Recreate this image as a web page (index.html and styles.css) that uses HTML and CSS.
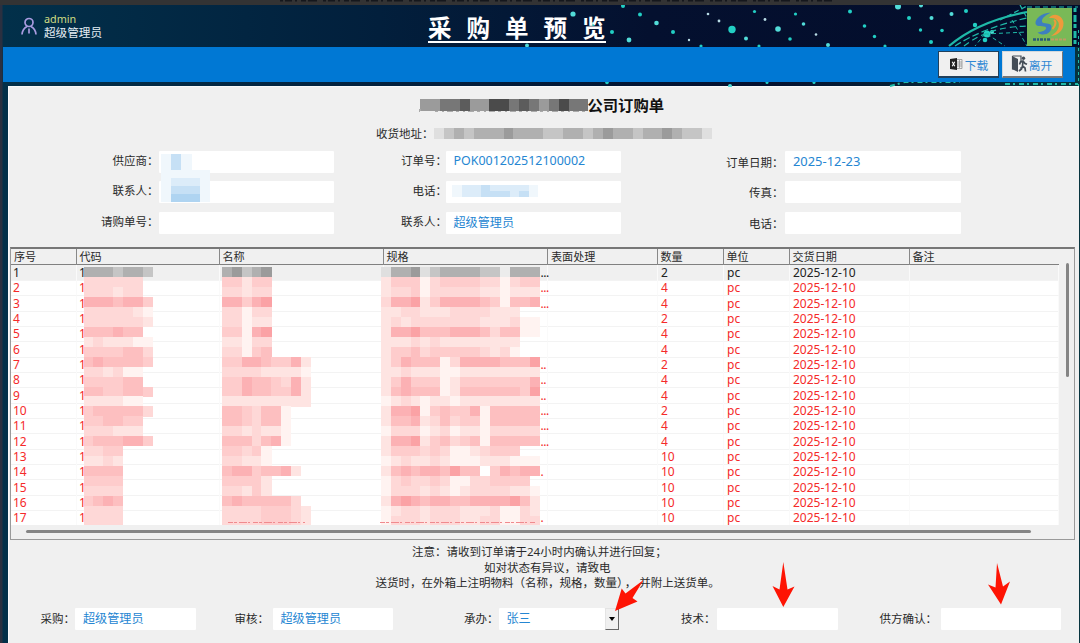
FILE: index.html
```html
<!DOCTYPE html>
<html lang="zh-CN">
<head>
    <meta charset="UTF-8">
    <meta name="viewport" content="width=device-width, initial-scale=1.0">
    <title>采购单预览</title>
    <link rel="stylesheet" href="styles.css">
</head>
<body>

    <div class="window">
        <div class="titlebar">
            <svg width="560" height="5"><path d="M4 0.5H556" stroke="#15171c" stroke-width="2" stroke-dasharray="3 2 7 3 2 4 5 2 9 6"/></svg>
        </div>

        <div class="header">
            <svg class="stars" id="stars" width="1080" height="82" viewBox="0 5 1080 82"></svg>
            <div class="user">
                <svg width="18" height="20" viewBox="0 0 18 20" fill="none" stroke="#a99be0" stroke-width="1.7">
                    <circle cx="9" cy="6.500" r="4"/>
                    <path d="M2 18.500c.3-4 2.300-6.500 5-8M16 18.500c-.3-4-2.300-6.500-5-8M9 12.500v5"/>
                </svg>
                <div class="user-text">
                    <div class="login">admin</div>
                    <div class="role">超级管理员</div>
                </div>
            </div>
            <h1>采 购 单 预 览</h1>
            <svg class="logo" width="45" height="38" viewBox="0 0 45 38">
                <rect width="45" height="38" fill="#79b957"/>
                <path d="M24 4.500C14 5 8 11 8.500 15.500C9 20 18 17 19 19.500C20 22 15 24 10.500 24.500C17 29.500 25 24.500 24.500 18.500C24 14 15.500 16.500 15 13.500C14.500 10 19 7 24 4.500Z" fill="#3d7fc0"/>
                <path d="M22 10C27 3.500 36.500 8 36.500 15.500C36.500 22 31 27.500 24 28C30 24.500 33 19.500 31.500 14.500C30 10.500 26 9.500 22 10Z" fill="#ee9a3c"/>
                <path d="M27 12C30 14 28 18.500 25.500 21" fill="none" stroke="#ee9a3c" stroke-width="2"/>
                <path d="M6 31.500H23" stroke="#285b78" stroke-width="2.500" stroke-dasharray="3 1 2 1"/>
                <path d="M24 31.500H40" stroke="#c29a62" stroke-width="2" stroke-dasharray="3 1"/>
            </svg>
        </div>

        <div class="toolbar">
            <button class="tool focused">
                <svg width="14" height="12" viewBox="0 0 14 12">
                    <path d="M8 1.500h5v9H8M8 4h5M8 6h5M8 8h5M10.500 2v8" fill="none" stroke="#888" stroke-width=".7"/>
                    <path d="M1 1L8 0v12L1 11z" fill="#222"/>
                    <path d="M3.200 3.800l2.600 4.400M5.800 3.800l-2.600 4.400" stroke="#fff" stroke-width="1.100"/>
                </svg>
                <span>下载</span>
            </button>
            <button class="tool exit">
                <svg width="18" height="18" viewBox="0 0 18 18">
                    <path d="M1.500 1h8.500v6.500M1.500 1v13h5M10 12v2" fill="none" stroke="#444c56" stroke-width="1.200"/>
                    <path d="M1 1l6 3v13l-6-3z" fill="#444c56"/>
                    <circle cx="12.500" cy="3.200" r="1.700" fill="#444c56"/>
                    <path d="M12 6l-.5 5 2.500 2 .5 3.500M11.500 11l-1 3-2.500 2M8.500 9.500l1-2.500 2.500-1 2 2.500 2 .8" fill="none" stroke="#444c56" stroke-width="1.700"/>
                </svg>
                <span>离开</span>
            </button>
        </div>

        <div class="panel">
            <div class="company">
                <svg class="mosaic" id="m-company" width="169" height="17"></svg>
                <h2>公司订购单</h2>
            </div>
            <div class="address">
                <span>收货地址：</span>
                <svg class="mosaic" id="m-address" width="278" height="11"></svg>
            </div>

            <div class="form">
                <div class="form-col first">
                    <label>供应商：</label><div class="field top"><svg class="mosaic over" id="m-supplier" width="50" height="60"></svg></div>
                    <label>联系人：</label><div class="field"></div>
                    <label>请购单号：</label><div class="field"></div>
                </div>
                <div class="form-col second">
                    <label>订单号：</label><div class="field">POK001202512100002</div>
                    <label>电话：</label><div class="field"><svg class="mosaic" id="m-phone" width="86" height="12"></svg></div>
                    <label>联系人：</label><div class="field cjk">超级管理员</div>
                </div>
                <div class="form-col third">
                    <label>订单日期：</label><div class="field date">2025-12-23</div>
                    <label>传真：</label><div class="field"></div>
                    <label>电话：</label><div class="field"></div>
                </div>
            </div>

            <div class="grid">
                <div class="grid-head">
                    <div>序号</div><div>代码</div><div>名称</div><div>规格</div><div>表面处理</div><div>数量</div><div>单位</div><div>交货日期</div><div>备注</div>
                </div>
                <div class="grid-body" id="rows"></div>
                <svg class="mosaic cover" id="m-grid" width="545" height="258"></svg>
                <div class="vscroll"></div>
                <div class="hscroll"></div>
            </div>

            <div class="notes">
                <p>注意：请收到订单请于24小时内确认并进行回复；</p>
                <p class="n2">如对状态有异议，请致电</p>
                <p class="n3">送货时，在外箱上注明物料（名称，规格，数量）<span class="comma">，</span>并附上送货单。</p>
            </div>

            <div class="signs">
                <label class="s1">采购：</label><div class="field cjk">超级管理员</div>
                <label class="s2">审核：</label><div class="field cjk">超级管理员</div>
                <label class="s3">承办：</label><div class="field cjk combo">张三</div><div class="drop"><i></i></div>
                <label class="s4">技术：</label><div class="field"></div>
                <label class="s5">供方确认：</label><div class="field"></div>
            </div>
        </div>

        <svg class="arrows" width="460" height="60" viewBox="600 555 460 60" fill="#fe1404">
            <path d="M615 611L621.700 588.500L625.500 593.500L643.500 580L632.500 598L637.500 601.500Z"/>
            <path d="M783.300 607L772.500 586L779.500 589.500L783.300 562L787.500 589.500L794.500 586.500Z"/>
            <path d="M1001 604.500L988 584.500L995.500 587.500L997 563L1003 586.500L1010 581.500Z"/>
        </svg>
    </div>

    <script src="script.js"></script>
</body>
</html>
```
FILE: styles.css
```css
* {
    box-sizing: border-box;
}
body {
    margin: 0;
    font-family: "Noto Sans", "Noto Sans CJK SC", sans-serif;
    font-size: 11.5px;
    color: #2a2a2a;
}
svg {
    display: block;
    flex: none;
}
h1, h2, p {
    margin: 0;
}
.mosaic {
    shape-rendering: crispEdges;
}
.window {
    position: relative;
    width: 1080px;
    height: 643px;
    overflow: hidden;
    background: linear-gradient(90deg, #2b3040 0, #2b3040 2px, #033049 3px, #031f3c 40%, #04102f 70%, #07343f 100%);
}
.titlebar {
    height: 5px;
    padding-left: 276px;
    background: #333334;
}
.header {
    position: relative;
    display: flex;
    height: 41.5px;
    margin-left: 3px;
    background: linear-gradient(90deg, #02304a 0, #021f3c 35%, #04102f 60%, #030d2b 100%);
}
.stars {
    position: absolute;
    left: -3px;
    top: 0;
}
.user {
    display: flex;
    width: 425px;
    padding: 11px 0 0 17px;
    gap: 6px;
    position: relative;
}
.user-text {
    margin-top: -4px;
    font-size: 11.6px;
    line-height: 14px;
}
.login {
    color: #cfdc82;
    font-size: 10.8px;
}
.role {
    color: #e5eef4;
}
.header h1 {
    position: relative;
    height: 38px;
    padding-top: 8px;
    font-size: 23.5px;
    line-height: 30px;
    font-weight: bold;
    color: #fff;
    word-spacing: 8.9px;
    white-space: nowrap;
    border-bottom: 2px solid #fff;
}
.logo {
    position: relative;
    margin: 3px 8px 0 auto;
}
.toolbar {
    position: relative;
    display: flex;
    justify-content: flex-end;
    gap: 3px;
    height: 35px;
    margin: 0 5px 0 3px;
    padding: 4.5px 12px 0 0;
    background: #0078d4;
}
.tool {
    display: flex;
    align-items: center;
    justify-content: center;
    gap: 2px;
    width: 61px;
    height: 27px;
    padding: 0;
    border: 1px solid #d4d8dc;
    border-right-color: #777;
    border-bottom: 2px solid #777;
    background: #f0f0f0;
    color: #2f88d4;
    font: 11.8px "Noto Sans CJK SC", sans-serif;
}
.tool.focused {
    border: 1px solid #20405c;
    border-bottom-width: 2px;
}
.tool.exit {
    gap: 0;
    padding-right: 2px;
}
.panel {
    height: 557px;
    margin: 4.5px 1.5px 0 7.5px;
    padding: 12px 4px 0 1.5px;
    background: #f0f0f0;
    border-top: 1px solid #fafafa;
    border-left: 1px solid #fbfbfb;
}
.company {
    display: flex;
    height: 28px;
    padding-left: 408.5px;
}
.company h2 {
    margin-top: -5px;
    font-size: 15.3px;
    line-height: 22px;
    color: #111;
}
.address {
    display: flex;
    height: 23.5px;
    padding-left: 366px;
}
.address span {
    width: 58px;
    line-height: 17px;
    margin-top: -2px;
}
.address .mosaic {
    margin-top: 1px;
}
.form {
    display: flex;
    height: 96px;
}
.form-col {
    display: grid;
    grid-template-rows: repeat(3, 22px);
    row-gap: 8.7px;
}
.form-col label {
    text-align: right;
    line-height: 19px;
    white-space: nowrap;
}
.first {
    grid-template-columns: 148.5px 175.5px;
}
.second {
    grid-template-columns: 111.5px 175.5px;
}
.second label {
    margin-right: -1.5px;
}
.third {
    grid-template-columns: 164px 175.5px;
}
.third label {
    padding-right: 1.5px;
    line-height: 23px;
}
.field {
    position: relative;
    height: 22px;
    padding-left: 8px;
    background: #fff;
    border-radius: 1px;
    color: #2586d2;
    font-size: 12.45px;
    line-height: 20px;
    white-space: nowrap;
}
.field.top {
    z-index: 1;
}
.field.cjk {
    font-size: 12.1px;
    line-height: 21px;
}
.field.date {
    font-size: 12.9px;
}
.field .mosaic {
    margin: 4px 0 0 -2px;
}
.field .mosaic.over {
    position: absolute;
    left: 2px;
    top: -1px;
    margin: 0;
}
.grid {
    position: relative;
    height: 293px;
    border: 1px solid #9a9a9a;
    border-top: 2px solid #777;
}
.grid-head, .row {
    display: grid;
    width: 1047.5px;
    grid-template-columns: 65.5px 143px 164px 164.5px 109.5px 66px 66px 120px 149px;
}
.grid-head {
    height: 16.5px;
    border-bottom: 1.5px solid #808080;
    font-size: 11.1px;
    line-height: 16px;
}
.grid-head div {
    padding-left: 3px;
    border-right: 1px solid #888;
}
.grid-head div:last-child {
    border-right: none;
}
.grid-body {
    width: 1047.5px;
    height: 259.5px;
    overflow: hidden;
    background: #fff;
}
.row {
    height: 15.34px;
    font-size: 12px;
    line-height: 15px;
    color: #f52a2a;
}
.row div {
    padding-left: 3.5px;
    border-right: 1px solid #fafafa;
    border-bottom: 1px solid #f3f3f3;
    white-space: nowrap;
}
.row div:first-child {
    padding-left: 2px;
}
.row div:nth-child(2) {
    padding-left: 2.5px;
}
.row .spec {
    padding-left: 157px;
    letter-spacing: -0.5px;
}
.row.selected {
    background: #f0f0f0;
    color: #222;
}
.cover {
    position: absolute;
    left: 72px;
    top: 18px;
}
.vscroll {
    position: absolute;
    right: 5px;
    top: 14px;
    width: 3px;
    height: 114px;
    border-radius: 2px;
    background: #858585;
}
.hscroll {
    position: absolute;
    left: 15px;
    bottom: 6px;
    width: 1005px;
    height: 3px;
    border-radius: 2px;
    background: #858585;
}
.notes {
    padding-top: 4.5px;
    line-height: 15.5px;
    white-space: nowrap;
}
.notes p {
    padding-left: 402px;
}
.notes .n2 {
    padding-left: 474px;
}
.notes .n3 {
    padding-left: 365.5px;
}
.comma {
    margin: 0 3px 0 2px;
}
.signs {
    display: flex;
    margin-top: 17px;
}
.signs label {
    line-height: 21px;
    white-space: nowrap;
}
.signs .field {
    width: 120.5px;
}
.signs .combo {
    width: 106px;
}
.s1 { width: 65px; padding-left: 30.5px; }
.s2 { width: 77px; padding-left: 39px; }
.s3 { width: 105.5px; padding-left: 71px; }
.s4 { width: 98px; padding-left: 62px; }
.s5 { width: 103px; padding-left: 42px; }
.drop {
    display: flex;
    align-items: center;
    justify-content: center;
    width: 14.5px;
    height: 22px;
    border: 1px solid #e4e4e4;
    border-right: 1.5px solid #666;
    border-bottom: 1.5px solid #666;
}
.drop i {
    border: 3px solid transparent;
    border-top: 4px solid #000;
    border-bottom: none;
}
.arrows {
    position: absolute;
    left: 600px;
    top: 555px;
}
```
FILE: script.js
```js
const NS = 'http://www.w3.org/2000/svg';

function add(svg, tag, attrs) {
    const el = document.createElementNS(NS, tag);
    for (const k in attrs) el.setAttribute(k, attrs[k]);
    svg.appendChild(el);
}

// order rows
const qty = [2, 4, 4, 2, 4, 4, 2, 4, 4, 2, 4, 4, 10, 10, 10, 10, 10];
const dots = ['...', '...', '...', '', '', '', '..', '..', '..', '...', '...', '...', '', '.', '', '', '.'];
const rows = document.getElementById('rows');
qty.forEach((q, i) => {
    const div = document.createElement('div');
    div.className = i === 0 ? 'row selected' : 'row';
    div.innerHTML = `<div>${i + 1}</div><div>1</div><div></div><div class="spec">${dots[i]}</div><div></div>
        <div>${q}</div><div>pc</div><div>2025-12-10</div><div></div>`;
    rows.appendChild(div);
});

// masked text, one character per block
const shades = {
    1: '#fff3f1', 2: '#fee4e2', 3: '#fed8d7', 4: '#fecccc', 5: '#fdbfc0', 6: '#fcb1b4', 7: '#fba2a5',
    a: '#dfdfdf', b: '#c5c5c5', c: '#b0b0b0', d: '#9b9b9b', e: '#ececec',
    f: '#777', g: '#5c5c5c', h: '#4b4b4b',
    p: '#f0f7fc', q: '#dcecf9', r: '#c6e0f5', s: '#afd4f1'
};
function mosaic(id, lines, x, y, w, h) {
    const svg = document.getElementById(id);
    lines.forEach((line, r) => [...line].forEach((c, k) => {
        if (shades[c]) {
            add(svg, 'rect', { x: x + k * w, y: y + r * h, width: w + 0.15, height: h + 0.15, fill: shades[c] });
        }
    }));
}

mosaic('m-company', ['ddffgddhhfgfdfhff'], 1, 0, 9.9, 11.5);
add(document.getElementById('m-company'), 'path', { d: 'M0 13L1.500 10M16 12.500H168', stroke: '#aaa', 'stroke-width': 1.5, 'stroke-dasharray': '3 4 2 3 6 3' });
mosaic('m-address', ['abcbcccdcccbbccbcdccbccdcbba'], 0, 0, 9.93, 11);
mosaic('m-supplier', ['prp', 'prp'], 0, 4, 10.2, 8);
mosaic('m-supplier', ['ppppp', 'pqqqp', 'prrrp', 'psssp'], 0, 20, 9.8, 8);
mosaic('m-phone', ['pqqrqqqqp', 'pqqrrrqrp'], 0, 0, 9.6, 6);

const code = [
    'cccbccb', '3333330', '3332330', '6665664', '3333321', '3333332', '5556550', '2322211', '4444553',
    '5655554', '3323110', '4444550', '5544554', '2222110', '4555553', '4455440', '3332220', '4555664',
    '3344', '2232', '5555', '4444', '3333', '4565', '3333', '3333'
];
const name = [
    'cdbcd', '44244', '33233', '66467', '33133', '33122', '44167', '22133', '33145',
    '446654462', '333322221', '446554362', '446554462', '222222222', '5543551', '5543551', '3323221', '5553561',
    '44341', '33221', '56645562', '44442', '33242', '56555553', '333344432', '333344432'
];
const spec = [
    'accdabccccbbeccc', '2444134444331344', '2334133333221222', '3667246666541556', '22332223333222',
    '2323333333222311', '2667555666535511', '22232322222222', '244534444432310', '2465551366665557',
    '2232221122222222', '2464441244444446', '2565551255555547', '1232122122222222', '2667145446155555',
    '2556235344155555', '1333123122133333', '2667245345155555', '24443431123444', '1232232111222111',
    '2565665755046566', '134334311334444', '1333232123333221', '2676566556666752', '1233233322231132', '1333233322331133'
];
mosaic('m-grid', code, 0.5, 0.2, 9.94, 9.945);
mosaic('m-grid', name, 138.7, 0.2, 9.94, 9.945);
mosaic('m-grid', spec, 297.7, 0.2, 9.94, 9.945);
const cover = document.getElementById('m-grid');
add(cover, 'path', { d: 'M145 255.500H222M297 255.500H452', stroke: '#f08a8e', 'stroke-width': 1.2, 'stroke-dasharray': '5 1 3 2 8 1 2 3' });

// star field behind the header
const stars = [
    [573, 14, 2.6], [623, 6, 2], [640, 14.5, 2], [656.5, 23, 2.3], [593, 24, 2], [612, 32, 2], [629, 40, 2.4], [673, 32, 2],
    [689, 40, 1.2], [708, 14, 1.3], [719, 21, 1.4], [732, 29.5, 3.7], [746, 38.5, 2], [754.5, 11.5, 1.6], [765, 19.5, 1.4],
    [778, 29, 2.8], [790, 39, 1.8], [795.5, 14, 1.6], [803.5, 24, 1.8], [816, 34.5, 1.3], [850, 11.5, 2], [828, 45, 2],
    [864.5, 26, 1.8], [874.5, 36.5, 1.7], [898, 6.5, 3], [909, 18, 2], [920.5, 30, 1.7], [931.5, 18, 2], [931, 42, 2],
    [942, 30.5, 1.8], [951.5, 14, 2], [966, 11, 2], [975, 25, 2.2], [921, 5.5, 2], [759, 46, 1.6], [701, 46, 1.6], [527, 45.5, 2],
    [987, 34, 3.5], [985, 40, 2.3], [992, 32, 2], [885, 46, 1.6], [607, 82.5, 1.8], [730, 86, 2], [767, 82.5, 1.5], [814, 82.5, 1.5]
];
const sky = document.getElementById('stars');
stars.forEach(([cx, cy, r], i) => add(sky, 'circle', { cx, cy, r, fill: r < 1.5 ? '#b8dce6' : i % 3 ? '#22cfc4' : '#52dcd8' }));
[
    ['M949 46C968 30 995 18 1027 12', 2.2, ''],
    ['M955 46C975 33 1000 24 1027 18', 1.2, '7 3'],
    ['M964 46C985 30 1005 27 1027 26', 1.2, '6 4'],
    ['M985 34L1027 32M987 34L1005 46M985 34L975 46M1012 20L1027 46', 1, '4 3'],
    ['M1000 20L1027 6M1027 7H1078M1020 5L1027 18', 1.2, '5 3'],
    ['M1075 8V44', 3, '4 3 7 2'],
    ['M1078.500 30V86', 1, '3 3'],
    ['M890 86L905 82H960M1005 84H1078', 2, '5 3 2 4']
].forEach(([d, w, dash]) => add(sky, 'path', { d, fill: 'none', stroke: '#1fb9a8', 'stroke-width': w, 'stroke-dasharray': dash }));
```
